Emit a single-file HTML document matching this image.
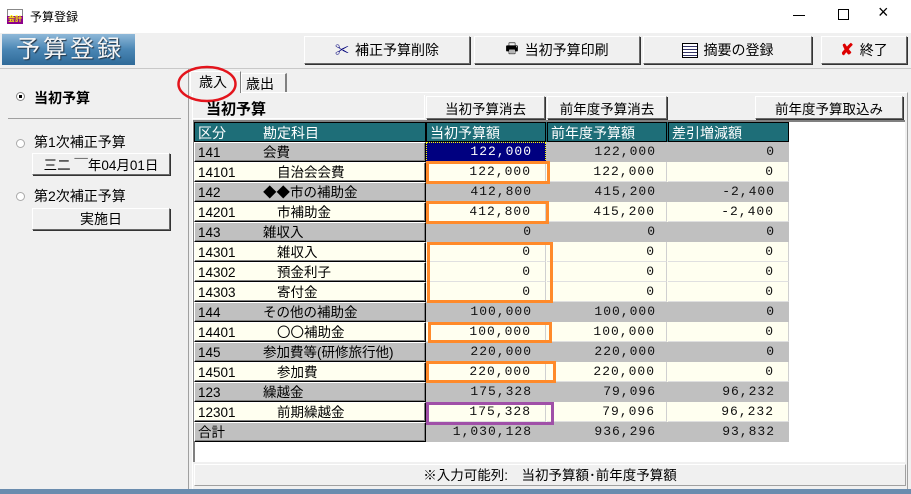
<!DOCTYPE html>
<html><head><meta charset="utf-8"><style>
*{margin:0;padding:0;box-sizing:border-box}
body{width:911px;height:494px;background:#f0f0f0;position:relative;overflow:hidden;font-family:"Liberation Sans","Noto Sans CJK JP",sans-serif;font-size:13px;color:#000}
.a{position:absolute}
.btn{position:absolute;background:#f0f0f0;border:1px solid;border-color:#fff #696969 #696969 #fff;box-shadow:1px 1px 0 #333;display:flex;align-items:center;justify-content:center;font-size:14px}
.row{position:absolute;left:194px;height:20px;width:595px;font-size:13.5px}
.row div{position:absolute;top:0;height:20px;line-height:20px}
.k{left:0;width:232px;border:1px solid #000;border-top-color:#fff;border-left-color:#fff;box-shadow:inset -1px -1px 0 #808080}
.g{background:#c0c0c0}
.c{background:#fffff0}
.n{text-align:right;font-family:"Liberation Mono","Noto Sans CJK JP",monospace;font-size:13px;letter-spacing:1px;color:#111}
.n1{left:232px;width:120px;padding-right:14px}.n2{left:353px;width:120px;padding-right:11px}.n3{left:474px;width:121px;padding-right:14px}
.c .n{border-right:1px solid #d0d0d0;border-bottom:1px solid #e0e0e0}
.code{position:absolute;left:3px}
.nm{position:absolute;left:68px}
.nm2{left:82px}
.box{position:absolute;border:3px solid #ff8a2a}
</style></head><body>
<div class="a" style="left:0;top:0;width:911px;height:33px;background:#fff"></div>
<div class="a" style="left:7px;top:9px;width:16px;height:15px;background:#ffffff;border:1px solid #888"></div>
<div class="a" style="left:7px;top:16px;width:16px;height:8px;background:#8c008c;color:#ff0;font-size:7px;line-height:8px;text-align:center;font-weight:bold">会計</div>
<div class="a" style="left:30px;top:8px;font-size:12px">予算登録</div>
<div class="a" style="left:793px;top:15px;width:12px;height:1px;background:#000"></div>
<div class="a" style="left:838px;top:9px;width:11px;height:11px;border:1px solid #000"></div>
<div class="a" style="left:878px;top:2px;font-size:18px;font-weight:300">×</div>
<div class="a" style="left:2px;top:34px;width:133px;height:31px;background:linear-gradient(180deg,#8fb8d8 0%,#4a86b4 50%,#2f6a98 100%);color:#f4f4f4;font-size:24px;line-height:31px;padding-left:14px;letter-spacing:3px;text-shadow:1px 1px 1px #234">予算登録</div>
<div class="btn" style="left:304px;top:36px;width:166px;height:28px"><span style="color:#00007a;margin-right:6px">✂</span>補正予算削除</div>
<div class="btn" style="left:474px;top:36px;width:166px;height:28px"><span style="margin-right:6px">🖶</span>当初予算印刷</div>
<div class="btn" style="left:643px;top:36px;width:169px;height:28px"><span style="display:inline-block;width:16px;height:15px;border:1px solid #000;background:repeating-linear-gradient(#fff 0 2px,#336 2px 3px);margin-right:6px"></span>摘要の登録</div>
<div class="btn" style="left:821px;top:36px;width:86px;height:28px"><span style="color:#d00;font-weight:bold;font-size:16px;margin-right:6px">✘</span>終了</div>
<div class="a" style="left:0;top:68px;width:911px;height:1px;background:#c8c8c8"></div>
<div class="a" style="left:0;top:69px;width:189px;height:420px;border-right:1px solid #a0a0a0"></div>
<div class="a" style="left:16px;top:92px;width:9px;height:9px;border-radius:50%;border:1px solid #888;background:#fff"></div>
<div class="a" style="left:19px;top:95px;width:3px;height:3px;background:#000"></div>
<div class="a" style="left:34px;top:88px;font-size:14px;font-weight:bold">当初予算</div>
<div class="a" style="left:8px;top:118px;width:173px;height:1px;background:#a0a0a0"></div>
<div class="a" style="left:16px;top:139px;width:9px;height:9px;border-radius:50%;border:1px solid #aaa;background:#fff"></div>
<div class="a" style="left:34px;top:132px;font-size:14px">第1次補正予算</div>
<div class="btn" style="left:32px;top:153px;width:138px;height:22px;font-size:13.5px">三二 ￣年04月01日</div>
<div class="a" style="left:16px;top:192px;width:9px;height:9px;border-radius:50%;border:1px solid #aaa;background:#fff"></div>
<div class="a" style="left:34px;top:186px;font-size:14px">第2次補正予算</div>
<div class="btn" style="left:32px;top:208px;width:138px;height:22px;font-size:14px">実施日</div>
<div class="a" style="left:192px;top:92px;width:716px;height:398px;border:1px solid #fff;border-right-color:#a0a0a0;border-bottom-color:#a0a0a0"></div>
<div class="a" style="left:190px;top:71px;width:51px;height:22px;background:#f0f0f0;border:1px solid #fff;border-right-color:#808080;border-bottom:none;padding-left:8px;font-size:14px">歳入</div>
<div class="a" style="left:241px;top:73px;width:46px;height:19px;border:1px solid #fff;border-right:2px solid #808080;border-bottom:none;padding-left:4px;font-size:14px">歳出</div>
<svg class="a" style="left:176px;top:64px" width="64" height="40"><ellipse cx="31" cy="20" rx="28.5" ry="17" fill="none" stroke="#e3141c" stroke-width="2.5"/></svg>
<div class="a" style="left:193px;top:95px;width:232px;height:24px;border-right:1px solid #fff;border-bottom:1px solid #fff"></div>
<div class="a" style="left:206px;top:98px;font-size:15px;font-weight:bold">当初予算</div>
<div class="btn" style="left:426px;top:96px;width:119px;height:23px;font-size:13.5px">当初予算消去</div>
<div class="btn" style="left:547px;top:96px;width:120px;height:23px;font-size:13.5px">前年度予算消去</div>
<div class="btn" style="left:755px;top:96px;width:148px;height:23px;font-size:13.5px">前年度予算取込み</div>
<div class="a" style="left:193px;top:120px;width:712px;height:342px;background:#fff;border-left:2px solid #808080;border-top:2px solid #808080"></div>
<div class="row" style="top:122px;background:#1e6e78;color:#fff">
<div style="left:0;width:232px;border:1px solid #000;padding-left:3px;font-size:14px;background:#1e6e78">区分<span style="position:absolute;left:68px">勘定科目</span></div>
<div style="left:232px;width:120px;border:1px solid #000;padding-left:3px;font-size:14px">当初予算額</div>
<div style="left:353px;width:120px;border:1px solid #000;padding-left:3px;font-size:14px">前年度予算額</div>
<div style="left:474px;width:121px;border:1px solid #000;padding-left:3px;font-size:14px">差引増減額</div>
</div>

<div class="row g" style="top:142px"><div class="k g"><span class="code">141</span><span class="nm">会費</span></div><div class="n n1" style="background:#000080;color:#fff;outline:1px dotted #ff0;outline-offset:-1px">122,000</div><div class="n n2">122,000</div><div class="n n3">0</div></div>
<div class="row c" style="top:162px"><div class="k c"><span class="code">14101</span><span class="nm nm2">自治会会費</span></div><div class="n n1">122,000</div><div class="n n2">122,000</div><div class="n n3">0</div></div>
<div class="row g" style="top:182px"><div class="k g"><span class="code">142</span><span class="nm">◆◆市の補助金</span></div><div class="n n1">412,800</div><div class="n n2">415,200</div><div class="n n3">-2,400</div></div>
<div class="row c" style="top:202px"><div class="k c"><span class="code">14201</span><span class="nm nm2">市補助金</span></div><div class="n n1">412,800</div><div class="n n2">415,200</div><div class="n n3">-2,400</div></div>
<div class="row g" style="top:222px"><div class="k g"><span class="code">143</span><span class="nm">雑収入</span></div><div class="n n1">0</div><div class="n n2">0</div><div class="n n3">0</div></div>
<div class="row c" style="top:242px"><div class="k c"><span class="code">14301</span><span class="nm nm2">雑収入</span></div><div class="n n1">0</div><div class="n n2">0</div><div class="n n3">0</div></div>
<div class="row c" style="top:262px"><div class="k c"><span class="code">14302</span><span class="nm nm2">預金利子</span></div><div class="n n1">0</div><div class="n n2">0</div><div class="n n3">0</div></div>
<div class="row c" style="top:282px"><div class="k c"><span class="code">14303</span><span class="nm nm2">寄付金</span></div><div class="n n1">0</div><div class="n n2">0</div><div class="n n3">0</div></div>
<div class="row g" style="top:302px"><div class="k g"><span class="code">144</span><span class="nm">その他の補助金</span></div><div class="n n1">100,000</div><div class="n n2">100,000</div><div class="n n3">0</div></div>
<div class="row c" style="top:322px"><div class="k c"><span class="code">14401</span><span class="nm nm2">〇〇補助金</span></div><div class="n n1">100,000</div><div class="n n2">100,000</div><div class="n n3">0</div></div>
<div class="row g" style="top:342px"><div class="k g"><span class="code">145</span><span class="nm">参加費等(研修旅行他)</span></div><div class="n n1">220,000</div><div class="n n2">220,000</div><div class="n n3">0</div></div>
<div class="row c" style="top:362px"><div class="k c"><span class="code">14501</span><span class="nm nm2">参加費</span></div><div class="n n1">220,000</div><div class="n n2">220,000</div><div class="n n3">0</div></div>
<div class="row g" style="top:382px"><div class="k g"><span class="code">123</span><span class="nm">繰越金</span></div><div class="n n1">175,328</div><div class="n n2">79,096</div><div class="n n3">96,232</div></div>
<div class="row c" style="top:402px"><div class="k c"><span class="code">12301</span><span class="nm nm2">前期繰越金</span></div><div class="n n1">175,328</div><div class="n n2">79,096</div><div class="n n3">96,232</div></div>
<div class="row g" style="top:422px"><div class="k g"><span class="code">合計</span></div><div class="n n1">1,030,128</div><div class="n n2">936,296</div><div class="n n3">93,832</div></div>

<div class="box" style="left:426px;top:161px;width:124px;height:23px"></div>
<div class="box" style="left:426px;top:201px;width:123px;height:23px"></div>
<div class="box" style="left:427px;top:242px;width:126px;height:61px"></div>
<div class="box" style="left:428px;top:322px;width:124px;height:21px"></div>
<div class="box" style="left:426px;top:361px;width:130px;height:22px"></div>
<div class="box" style="left:426px;top:402px;width:128px;height:23px;border-color:#a050a8"></div>
<div class="a" style="left:194px;top:464px;width:712px;height:22px;border:1px solid #fff;border-right-color:#a0a0a0;border-bottom-color:#a0a0a0;text-align:center;line-height:21px;font-size:13.5px">※入力可能列:　当初予算額･前年度予算額</div>
<div class="a" style="left:0;top:489px;width:911px;height:5px;background:#6a8cae"></div>
</body></html>
